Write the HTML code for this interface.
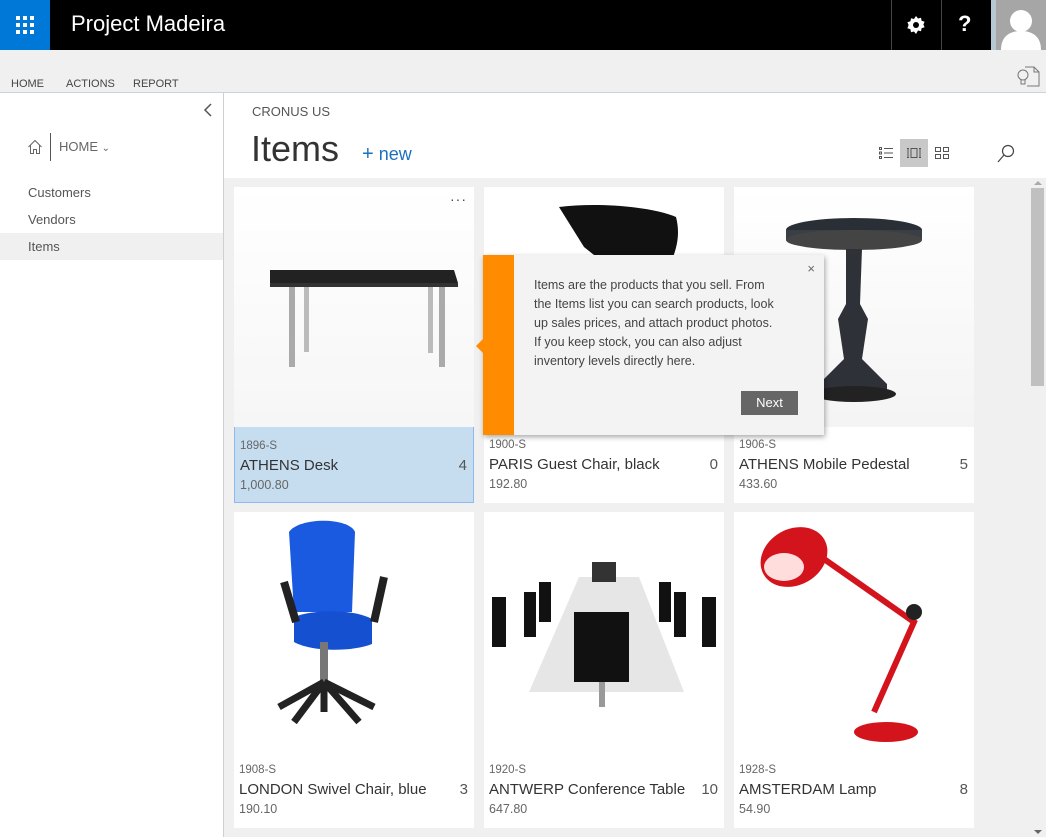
<!DOCTYPE html>
<html><head><meta charset="utf-8"><style>
*{margin:0;padding:0;box-sizing:border-box}
body{width:1046px;height:837px;overflow:hidden;background:#fff;font-family:"Segoe UI","Liberation Sans",sans-serif;color:#333;position:relative}
.abs{position:absolute}
.top{left:0;top:0;width:1046px;height:50px;background:#000}
.waffle{left:0;top:0;width:50px;height:50px;background:#0078d7}
.ribbon{left:0;top:50px;width:1046px;height:43px;background:#f0f0f0;border-bottom:1px solid #c8d4e0}
.rt{top:78px;font-size:11px;color:#444}
.nav a{position:absolute;left:28px;font-size:13px;color:#555}
.card{position:absolute;width:240px;height:316px;background:#fff}
.card .img{position:absolute;left:0;top:0;width:240px;height:240px;overflow:hidden}
.card .no{position:absolute;left:5px;top:252px;font-size:11.5px;color:#666}
.card .nm{position:absolute;left:5px;top:269px;font-size:15px;color:#333}
.card .q{position:absolute;right:6px;top:269px;font-size:15px;color:#555}
.card .pr{position:absolute;left:5px;top:290px;font-size:12.5px;color:#666}
</style></head><body>
<div class="abs top"></div>
<div class="abs waffle"><svg width="50" height="50"><g fill="#fff"><rect x="16" y="16" width="4" height="4"/><rect x="23" y="16" width="4" height="4"/><rect x="30" y="16" width="4" height="4"/><rect x="16" y="23" width="4" height="4"/><rect x="23" y="23" width="4" height="4"/><rect x="30" y="23" width="4" height="4"/><rect x="16" y="30" width="4" height="4"/><rect x="23" y="30" width="4" height="4"/><rect x="30" y="30" width="4" height="4"/></g></svg></div>
<div class="abs" style="left:71px;top:11px;color:#fff;font-size:22px">Project Madeira</div>
<div class="abs" style="left:891px;top:0;width:1px;height:50px;background:#444"></div>
<div class="abs" style="left:941px;top:0;width:1px;height:50px;background:#444"></div>
<svg class="abs" style="left:906px;top:15px" width="20" height="20" viewBox="0 0 20 20"><path d="M10 1l2 2.5 3-.8.6 3 3 1-1.2 2.8 1.2 2.8-3 1-.6 3-3-.8L10 19l-2-2.5-3 .8-.6-3-3-1L2.6 10 1.4 7.2l3-1 .6-3 3 .8z" fill="#fff"/><circle cx="10" cy="10" r="3" fill="#000"/></svg>
<div class="abs" style="left:958px;top:11px;color:#fff;font-size:22px;font-weight:bold">?</div>
<div class="abs" style="left:991px;top:0;width:5px;height:50px;background:#b6c8d2"></div>
<div class="abs" style="left:996px;top:0;width:50px;height:50px;background:#a6a6a6;overflow:hidden"><svg width="50" height="50"><circle cx="25" cy="21" r="11" fill="#fff"/><path d="M5 50c0-14 9-19 20-19s20 5 20 19z" fill="#fff"/></svg></div>
<div class="abs ribbon"></div>
<div class="abs rt" style="left:11px">HOME</div>
<div class="abs rt" style="left:66px">ACTIONS</div>
<div class="abs rt" style="left:133px">REPORT</div>
<svg class="abs" style="left:1015px;top:64px" width="26" height="24" viewBox="0 0 26 24" fill="none" stroke="#777" stroke-width="1"><path d="M10 3h9l5 5v14H12"/><path d="M19 3v5h5"/><circle cx="8" cy="11" r="5"/><path d="M6 16v4h4v-4"/></svg>
<div class="abs" style="left:223px;top:93px;width:1px;height:744px;background:#d0d0d0"></div>
<svg class="abs" style="left:202px;top:102px" width="12" height="16"><path d="M9 2L3 8l6 6" stroke="#555" stroke-width="1.5" fill="none"/></svg>
<svg class="abs" style="left:27px;top:139px" width="16" height="16" viewBox="0 0 16 16" fill="none" stroke="#666"><path d="M1.5 8L8 1.5 14.5 8M3.5 6.5V14.5h3v-4h3v4h3V6.5"/></svg>
<div class="abs" style="left:50px;top:133px;width:1px;height:28px;background:#555"></div>
<div class="abs" style="left:59px;top:139px;font-size:13px;color:#666">HOME <span style="font-size:10px">&#8964;</span></div>
<div class="nav">
<a style="top:185px">Customers</a>
<a style="top:212px">Vendors</a>
<div class="abs" style="left:0;top:233px;width:223px;height:27px;background:#f0f0f0"></div>
<a style="top:239px">Items</a>
</div>
<div class="abs" style="left:252px;top:104px;font-size:13px;color:#555">CRONUS US</div>
<div class="abs" style="left:251px;top:128px;font-size:36px;font-weight:300;color:#333;font-family:'Segoe UI Light','Liberation Sans',sans-serif">Items</div>
<div class="abs" style="left:362px;top:143px;font-size:18px;color:#1e6fbf"><span style="font-weight:300;font-size:20px">+</span> new</div>
<svg class="abs" style="left:878px;top:146px" width="16" height="14" fill="none" stroke="#555"><rect x="1.5" y="1.5" width="2" height="2"/><rect x="1.5" y="6" width="2" height="2"/><rect x="1.5" y="10.5" width="2" height="2"/><path d="M6 2.5h9M6 7h9M6 11.5h9"/></svg>
<div class="abs" style="left:900px;top:139px;width:28px;height:28px;background:#c8c8c8"></div>
<svg class="abs" style="left:906px;top:146px" width="16" height="14" fill="none" stroke="#555"><path d="M1 2.5h2M1 11.5h2M2 2.5v9M13 2.5h2M13 11.5h2M14 2.5v9"/><rect x="5" y="2.5" width="6" height="9"/></svg>
<svg class="abs" style="left:934px;top:146px" width="16" height="14" fill="none" stroke="#555"><rect x="1.5" y="1.5" width="5" height="4"/><rect x="9.5" y="1.5" width="5" height="4"/><rect x="1.5" y="8.5" width="5" height="4"/><rect x="9.5" y="8.5" width="5" height="4"/></svg>
<svg class="abs" style="left:996px;top:144px" width="20" height="20" fill="none" stroke="#444" stroke-width="1.2"><circle cx="12" cy="7" r="5.5"/><path d="M8 11l-6 7"/></svg>
<div class="abs" style="left:224px;top:178px;width:822px;height:659px;background:#f0f0f0"></div>
<div class="abs" style="left:1031px;top:188px;width:13px;height:198px;background:#c0c0c0"></div>
<div class="abs" style="left:1034px;top:181px;width:0;height:0;border-left:4px solid transparent;border-right:4px solid transparent;border-bottom:4px solid #aaa"></div>
<div class="abs" style="left:1034px;top:830px;width:0;height:0;border-left:4px solid transparent;border-right:4px solid transparent;border-top:4px solid #666"></div>

<!-- row 1 -->
<div class="card" style="left:234px;top:187px;border:1px solid #90b8f0;background:#c6ddf0">
 <div class="img" style="left:-1px;top:-1px;background:linear-gradient(#fff,#f6f6f6)">
  <div class="abs" style="right:7px;top:4px;font-size:14px;color:#444;letter-spacing:1px">···</div>
  <svg class="abs" style="left:0;top:0" width="240" height="240"><polygon points="36,83 220,83 224,96 36,96" fill="#222"/><polygon points="36,96 224,96 224,100 36,100" fill="#333"/><rect x="55" y="100" width="6" height="80" fill="#aaa"/><rect x="70" y="100" width="5" height="65" fill="#bbb"/><rect x="194" y="100" width="5" height="66" fill="#bbb"/><rect x="205" y="100" width="6" height="80" fill="#aaa"/></svg>
 </div>
 <div class="no">1896-S</div><div class="nm">ATHENS Desk</div><div class="q">4</div><div class="pr">1,000.80</div>
</div>
<div class="card" style="left:484px;top:187px">
 <div class="img"><svg width="240" height="240"><path d="M75 20c40-5 95 0 117 10 8 30-10 55-20 70L150 100 100 60z" fill="#111"/></svg></div>
 <div class="no">1900-S</div><div class="nm">PARIS Guest Chair, black</div><div class="q">0</div><div class="pr">192.80</div>
</div>
<div class="card" style="left:734px;top:187px">
 <div class="img" style="background:linear-gradient(#fff,#f4f4f4)"><svg width="240" height="240"><ellipse cx="120" cy="43" rx="68" ry="12" fill="#2a2f36"/><rect x="52" y="43" width="136" height="10" fill="#3a3f46"/><ellipse cx="120" cy="53" rx="68" ry="10" fill="#444"/><path d="M112 62h16l-2 55 8 15-6 40 25 25v12H85v-12l25-25-6-40 8-15z" fill="#2e3238"/><ellipse cx="120" cy="207" rx="42" ry="8" fill="#222"/></svg></div>
 <div class="no">1906-S</div><div class="nm">ATHENS Mobile Pedestal</div><div class="q">5</div><div class="pr">433.60</div>
</div>
<!-- row 2 -->
<div class="card" style="left:234px;top:512px">
 <div class="img"><svg width="240" height="240"><path d="M55 20c10-15 60-15 66 0l-3 80H60z" fill="#1a5ae0"/><path d="M60 105c20-8 60-8 78 2v25c-20 8-60 8-78-2z" fill="#1550d0"/><rect x="86" y="130" width="8" height="40" fill="#777"/><path d="M90 170l-45 25M90 170l50 25M90 170l-30 40M90 170l35 40M90 170v30" stroke="#222" stroke-width="7"/><path d="M50 70l12 40M150 65l-10 45" stroke="#222" stroke-width="8"/></svg></div>
 <div class="no">1908-S</div><div class="nm">LONDON Swivel Chair, blue</div><div class="q">3</div><div class="pr">190.10</div>
</div>
<div class="card" style="left:484px;top:512px">
 <div class="img"><svg width="240" height="240"><polygon points="95,65 155,65 200,180 45,180" fill="#e6e6e6"/><rect x="108" y="50" width="24" height="20" fill="#333"/><rect x="90" y="100" width="55" height="70" fill="#111"/><g fill="#111"><rect x="40" y="80" width="12" height="45"/><rect x="55" y="70" width="12" height="40"/><rect x="190" y="80" width="12" height="45"/><rect x="175" y="70" width="12" height="40"/><rect x="8" y="85" width="14" height="50"/><rect x="218" y="85" width="14" height="50"/></g><rect x="115" y="170" width="6" height="25" fill="#999"/></svg></div>
 <div class="no">1920-S</div><div class="nm">ANTWERP Conference Table</div><div class="q">10</div><div class="pr">647.80</div>
</div>
<div class="card" style="left:734px;top:512px">
 <div class="img"><svg width="240" height="240"><ellipse cx="60" cy="45" rx="35" ry="28" fill="#d4141c" transform="rotate(-30 60 45)"/><ellipse cx="50" cy="55" rx="20" ry="14" fill="#fdd"/><path d="M80 40l100 70-40 90" stroke="#d4141c" stroke-width="6" fill="none"/><circle cx="180" cy="100" r="8" fill="#222"/><ellipse cx="152" cy="220" rx="32" ry="10" fill="#d4141c"/></svg></div>
 <div class="no">1928-S</div><div class="nm">AMSTERDAM Lamp</div><div class="q">8</div><div class="pr">54.90</div>
</div>

<!-- callout -->
<div class="abs" style="left:483px;top:255px;width:341px;height:180px;background:#f3f3f3;box-shadow:1px 2px 5px rgba(0,0,0,.35)">
 <div class="abs" style="left:0;top:0;width:31px;height:180px;background:#ff8c00"></div>
 <div class="abs" style="left:-7px;top:84px;width:0;height:0;border-top:7px solid transparent;border-bottom:7px solid transparent;border-right:7px solid #ff8c00"></div>
 <div class="abs" style="right:9px;top:6px;font-size:13px;color:#666">×</div>
 <div class="abs" style="left:51px;top:21px;white-space:nowrap;font-size:12.5px;line-height:19px;color:#444">Items are the products that you sell. From<br>the Items list you can search products, look<br>up sales prices, and attach product photos.<br>If you keep stock, you can also adjust<br>inventory levels directly here.</div>
 <div class="abs" style="left:258px;top:136px;width:57px;height:24px;background:#666;color:#fff;font-size:13px;text-align:center;line-height:24px">Next</div>
</div>
</body></html>
